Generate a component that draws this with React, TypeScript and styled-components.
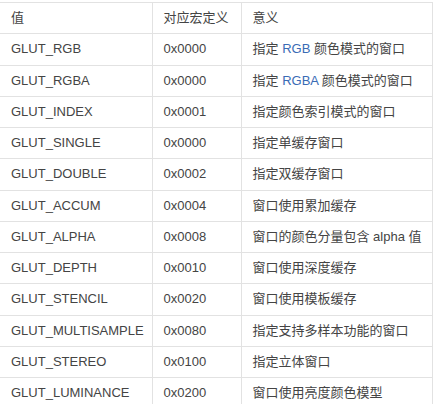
import React from "react";
import styled, { createGlobalStyle } from "styled-components";

interface Row {
  name: string;
  value: string;
  meaning: string;
  // word inside the meaning shown as a link
  link?: string;
}

const rows: Row[] = [
  { name: "GLUT_RGB", value: "0x0000", meaning: "指定 {} 颜色模式的窗口", link: "RGB" },
  { name: "GLUT_RGBA", value: "0x0000", meaning: "指定 {} 颜色模式的窗口", link: "RGBA" },
  { name: "GLUT_INDEX", value: "0x0001", meaning: "指定颜色索引模式的窗口" },
  { name: "GLUT_SINGLE", value: "0x0000", meaning: "指定单缓存窗口" },
  { name: "GLUT_DOUBLE", value: "0x0002", meaning: "指定双缓存窗口" },
  { name: "GLUT_ACCUM", value: "0x0004", meaning: "窗口使用累加缓存" },
  { name: "GLUT_ALPHA", value: "0x0008", meaning: "窗口的颜色分量包含 alpha 值" },
  { name: "GLUT_DEPTH", value: "0x0010", meaning: "窗口使用深度缓存" },
  { name: "GLUT_STENCIL", value: "0x0020", meaning: "窗口使用模板缓存" },
  { name: "GLUT_MULTISAMPLE", value: "0x0080", meaning: "指定支持多样本功能的窗口" },
  { name: "GLUT_STEREO", value: "0x0100", meaning: "指定立体窗口" },
  { name: "GLUT_LUMINANCE", value: "0x0200", meaning: "窗口使用亮度颜色模型" }
];

const GlobalStyle = createGlobalStyle`
  body {
    margin: 0;
    background: #ffffff;
    font-family: "Liberation Sans", Arial, "Noto Sans CJK SC", sans-serif;
  }
`;

const Page = styled.div`
  padding-top: 2px;
  width: 437px;
`;

const Table = styled.table`
  border-collapse: collapse;
  table-layout: fixed;
  width: 432px;
  color: #444444;
  font-size: 13px;
`;

const Cell = styled.td`
  height: 31.25px;
  box-sizing: border-box;
  padding: 0 0 0 11px;
  border: 1px solid #e2e2e2;
  border-left: none;
  text-align: left;
  font-weight: normal;
  white-space: nowrap;
  vertical-align: middle;
  line-height: 16px;

  & + & {
    border-left: 1px solid #e2e2e2;
  }
`;

const Link = styled.span`
  color: #3a6bb5;
`;

const Meaning = ({ row }: { row: Row }) => {
  if (!row.link) return <>{row.meaning}</>;
  const [before, after] = row.meaning.split("{}");
  return (
    <>
      {before}
      <Link>{row.link}</Link>
      {after}
    </>
  );
};

const App = () => {
  return (
    <Page>
      <GlobalStyle />
      <Table>
        <colgroup>
          <col style={{ width: 152 }} />
          <col style={{ width: 89 }} />
          <col style={{ width: 191 }} />
        </colgroup>
        <thead>
          <tr>
            <Cell as="th">值</Cell>
            <Cell as="th">对应宏定义</Cell>
            <Cell as="th">意义</Cell>
          </tr>
        </thead>
        <tbody>
          {rows.map((row) => (
            <tr key={row.name}>
              <Cell>{row.name}</Cell>
              <Cell>{row.value}</Cell>
              <Cell>
                <Meaning row={row} />
              </Cell>
            </tr>
          ))}
        </tbody>
      </Table>
    </Page>
  );
};

export default App;
